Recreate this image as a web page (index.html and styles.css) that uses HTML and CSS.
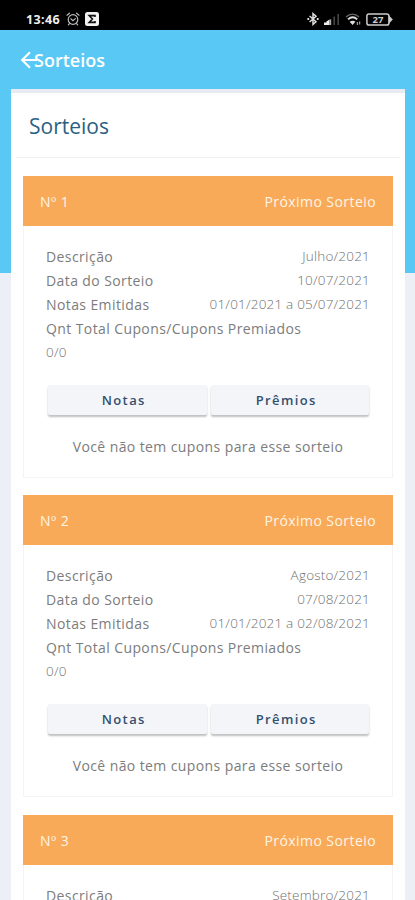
FILE: index.html
```html
<!DOCTYPE html>
<html lang="pt-BR">
<head>
  <meta charset="utf-8">
  <meta name="viewport" content="width=device-width, initial-scale=1">
  <title>Sorteios</title>
  <link rel="stylesheet" href="styles.css">
</head>
<body>
  <div class="app">
    <div class="status-bar">
      <div class="status-left">
        <span class="clock">13:46</span>
        <svg class="icon-alarm" width="14" height="14" viewBox="0 0 14 14" fill="none" stroke="#bbb" stroke-width="1.2" stroke-linecap="round">
          <circle cx="7" cy="7.5" r="4.8"/>
          <path d="M1 3.2L3.4 1.2M13 3.2L10.6 1.2M4.8 6.8L7 8.6L9.4 6.6M3.4 11.6L2.4 12.8M10.6 11.6L11.6 12.8"/>
        </svg>
        <svg class="icon-sigma" width="14" height="14" viewBox="0 0 14 14">
          <rect width="14" height="14" rx="2.5" fill="#f2f2f2"/>
          <path d="M10 5V3.6H4.2L7.4 7L4.2 10.4H10V9" fill="none" stroke="#111" stroke-width="1.6"/>
        </svg>
      </div>
      <div class="status-right">
        <svg width="12" height="14" viewBox="0 0 12 14" fill="none" stroke="#ddd" stroke-width="1.5">
          <path d="M2.6 4L9 9.8L6 12.4V1.6L9 4.2L2.6 10"/>
          <path d="M0.4 7H2.2M9.8 7H11.6" stroke-width="1.8"/>
        </svg>
        <svg width="16" height="12" viewBox="0 0 16 12">
          <path d="M0 12V9.5H2.4V12ZM2.4 12V8.4L5.6 6.6V12Z" fill="#eee"/>
          <path d="M5.6 12V6.4H7.2V12Z" fill="#aaa"/>
          <path d="M9.4 12V3.6H11V12ZM13.4 12V1H15V12Z" fill="#444"/>
        </svg>
        <svg width="16" height="13" viewBox="0 0 16 13" fill="none" stroke="#ddd">
          <path d="M1 4C5 0.4 10 0.4 14 4" stroke="#666" stroke-width="1.4"/>
          <path d="M3 6.4C6 3.8 9.4 3.8 12.2 6.4" stroke-width="1.9"/>
          <path d="M4.6 8.8C6.6 7.4 8.8 7.4 10.4 8.8L7.6 12Z" fill="#ddd" stroke="none"/>
          <path d="M12.4 9V12M14.6 8.6V11.4" stroke="#999" stroke-width="1.3"/>
        </svg>
        <span class="battery">
          <svg width="27" height="13" viewBox="0 0 27 13">
            <rect x="0.9" y="0.9" width="22" height="11.2" rx="2.2" fill="none" stroke="#ccc" stroke-width="1.5"/>
            <path d="M23 2.4L26.8 6.5L23 10.6Z" fill="#ccc"/>
          </svg>
          <span class="battery-level">27</span>
        </span>
      </div>
    </div>

    <header class="top-bar">
      <svg class="back" width="18" height="18" viewBox="0 0 18 18" fill="none" stroke="#fff" stroke-width="2.2">
        <path d="M17 9H2.6M10 1.2L2.2 9L10 16.8"/>
      </svg>
      <span class="top-title">Sorteios</span>
    </header>

    <main class="panel">
      <h1 class="panel-title">Sorteios</h1>

      <div class="draw-list">
        <section class="draw">
          <div class="draw-header"><span>Nº 1</span><span>Próximo Sorteio</span></div>
          <div class="draw-body">
            <div class="row"><span>Descrição</span><span class="value">Julho/2021</span></div>
            <div class="row"><span>Data do Sorteio</span><span class="value">10/07/2021</span></div>
            <div class="row"><span>Notas Emitidas</span><span class="value">01/01/2021 a 05/07/2021</span></div>
            <div class="row"><span>Qnt Total Cupons/Cupons Premiados</span></div>
            <div class="row"><span class="value">0/0</span></div>
            <div class="actions">
              <button type="button">Notas</button>
              <button type="button">Prêmios</button>
            </div>
            <p class="message">Você não tem cupons para esse sorteio</p>
          </div>
        </section>

        <section class="draw">
          <div class="draw-header"><span>Nº 2</span><span>Próximo Sorteio</span></div>
          <div class="draw-body">
            <div class="row"><span>Descrição</span><span class="value">Agosto/2021</span></div>
            <div class="row"><span>Data do Sorteio</span><span class="value">07/08/2021</span></div>
            <div class="row"><span>Notas Emitidas</span><span class="value">01/01/2021 a 02/08/2021</span></div>
            <div class="row"><span>Qnt Total Cupons/Cupons Premiados</span></div>
            <div class="row"><span class="value">0/0</span></div>
            <div class="actions">
              <button type="button">Notas</button>
              <button type="button">Prêmios</button>
            </div>
            <p class="message">Você não tem cupons para esse sorteio</p>
          </div>
        </section>

        <section class="draw">
          <div class="draw-header"><span>Nº 3</span><span>Próximo Sorteio</span></div>
          <div class="draw-body">
            <div class="row"><span>Descrição</span><span class="value">Setembro/2021</span></div>
          </div>
        </section>
      </div>
    </main>
  </div>
</body>
</html>
```
FILE: styles.css
```css
* {
  box-sizing: border-box;
}
body {
  margin: 0;
  font-family: "Open Sans", "Noto Sans", sans-serif;
  font-size: 14px;
  color: #7c7c7c;
}
.app {
  height: 900px;
  overflow: hidden;
  background: linear-gradient(#5ac8f5 273px, #eceff5 273px);
}

/* barra de status */
.status-bar {
  display: flex;
  justify-content: space-between;
  height: 30px;
  padding: 8px 22px 0 26px;
  background: #000;
}
.status-left,
.status-right {
  display: flex;
  align-items: center;
  height: 22px;
}
.clock {
  width: 35px;
  margin-right: 5px;
  font-size: 12.5px;
  font-weight: 700;
  letter-spacing: 0.4px;
  color: #eee;
}
.icon-sigma {
  margin-left: 5px;
}
.status-right {
  gap: 5px;
}
.battery {
  position: relative;
  height: 13px;
}
.battery svg {
  display: block;
}
.battery-level {
  position: absolute;
  left: 0;
  top: 0;
  width: 24px;
  text-align: center;
  font-size: 9.5px;
  line-height: 13px;
  font-weight: 700;
  color: #ccc;
}

.top-bar {
  display: flex;
  align-items: center;
  height: 59px;
  padding-left: 20px;
  color: #fff;
}
.top-title {
  margin-left: -4px;
  font-size: 18px;
  font-weight: 600;
}

.panel {
  margin: 0 10px 0 11px;
  background: #fff;
  border-top: 4px solid #e9ebf3;
}
.panel-title {
  height: 65px;
  margin: 0 5px;
  padding-left: 13px;
  border-bottom: 1px solid #f0f0f2;
  font-size: 21px;
  line-height: 66px;
  font-weight: 400;
  color: #2b5f82;
}
.draw-list {
  padding: 18px 12px 0;
}

/* cartão de sorteio */
.draw {
  height: 302px;
  margin-bottom: 17.4px;
  border: 1px solid #f3f4f6;
  border-top: 0;
}
.draw-header {
  display: flex;
  justify-content: space-between;
  height: 50px;
  margin: 0 -1px;
  padding: 0 17px;
  background: #f8aa58;
  color: #fff5e6;
  line-height: 51px;
  letter-spacing: 0.43px;
}
.draw-body {
  padding: 19px 22px 0;
  letter-spacing: 0.4px;
}
.row {
  display: flex;
  justify-content: space-between;
  height: 24px;
  line-height: 24px;
}
.value {
  font-size: 13.5px;
  line-height: 22px;
  font-weight: 300;
  letter-spacing: 0.2px;
  color: #707070;
}
.actions {
  display: flex;
  gap: 4px;
  margin: 20px 1px 0 2px;
}
.actions button {
  flex: 1;
  height: 30px;
  padding: 0 7px 0 0;
  border: 0;
  border-radius: 2px;
  background: #f3f5f9;
  box-shadow: 0 2px 2px rgba(0, 0, 0, 0.25);
  font-family: inherit;
  font-size: 13px;
  font-weight: 600;
  letter-spacing: 1.4px;
  color: #34506f;
}
.message {
  margin: 21px 0 0;
  text-align: center;
  line-height: 22px;
}
```
